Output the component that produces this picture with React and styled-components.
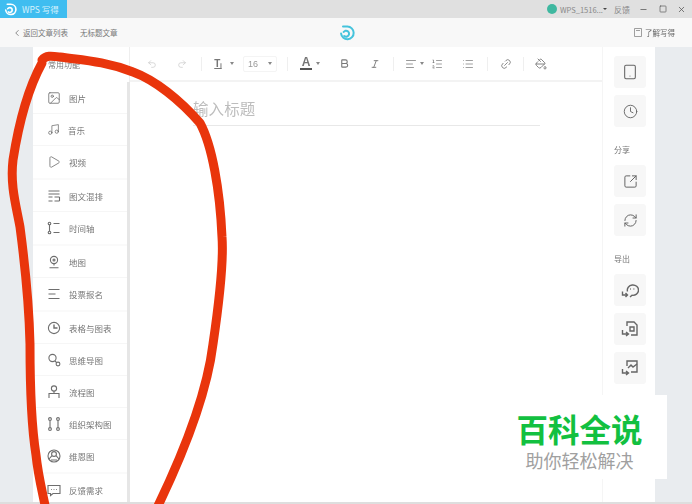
import React from 'react';
import styled, { createGlobalStyle } from 'styled-components';
import {
  Image, Music, Play, Undo2, Redo2, Bold, Italic, Link2, PaintBucket, AlignLeft,
  ListOrdered, List, Tablet, Clock, SquareArrowOutUpRight, RefreshCw, ChevronLeft, X, Minus, Square,
} from 'lucide-react';

const GlobalStyle = createGlobalStyle`
  html, body { margin: 0; padding: 0; background: #e9ecef; }
  body { font-family: "Noto Sans CJK SC", "Liberation Sans", sans-serif; }
`;

const Page = styled.div`
  position: relative;
  width: 692px;
  height: 504px;
  overflow: hidden;
  display: flex;
  flex-direction: column;
  background: #e9ecef;
`;

const Blurred = styled.div`
  display: flex;
  flex-direction: column;
  height: 100%;
  filter: blur(0.55px);
`;

const TitleBar = styled.div`
  height: 18px;
  flex: none;
  display: flex;
  align-items: center;
  background: #e0e0e0;
  color: #777;
  font-size: 8px;
`;

const AppTab = styled.div`
  width: 67px;
  height: 18px;
  display: flex;
  align-items: center;
  gap: 5px;
  padding-left: 4px;
  box-sizing: border-box;
  background: #3fbdf0;
  color: #d8f2fc;
  font-size: 8.5px;
`;

const TitleRight = styled.div`
  margin-left: auto;
  display: flex;
  align-items: center;
  padding-right: 1px;
`;

const Avatar = styled.span`
  width: 10px;
  height: 10px;
  border-radius: 50%;
  background: #3fb8a0;
  margin-right: 3px;
`;

const Account = styled.span`
  width: 43px;
  white-space: nowrap;
  font-size: 7.5px;
  color: #888;
`;

const Dot = styled.span`
  width: 0;
  height: 0;
  border-left: 2px solid transparent;
  border-right: 2px solid transparent;
  border-top: 2px solid #444;
  margin-right: 7px;
`;

const WinLabel = styled.span`
  width: 20px;
  color: #888;
`;

const WinButton = styled.span`
  width: 19px;
  display: flex;
  justify-content: center;
  color: #555;
`;

const NavBar = styled.div`
  height: 29px;
  flex: none;
  display: flex;
  align-items: center;
  background: #f8f8f8;
  color: #777;
  font-size: 7.5px;
  padding: 0 17px 0 12px;
`;

const NavBack = styled.span`
  display: flex;
  align-items: center;
  gap: 1px;
  width: 68px;
  white-space: nowrap;
`;

const NavTitle = styled.span`
  width: 100px;
  white-space: nowrap;
`;

const NavLogo = styled.span`
  margin-left: 159px;
  display: flex;
`;

const NavHelp = styled.span`
  margin-left: auto;
  display: flex;
  align-items: center;
  gap: 3px;
  color: #666;
`;

const Body = styled.div`
  flex: 1;
  min-height: 0;
  display: flex;
  padding-left: 33px;
  padding-right: 37px;
`;

const Sidebar = styled.div`
  width: 97px;
  flex: none;
  display: flex;
  flex-direction: column;
  background: #fff;
`;

const SideHead = styled.div`
  height: 35px;
  flex: none;
  display: flex;
  align-items: center;
  padding-left: 15px;
  font-size: 8px;
  color: #777;
  border-right: 1px solid #eee;
  padding-bottom: 1px;
  box-sizing: border-box;
`;

const SideList = styled.div`
  flex: 1;
  overflow: hidden;
  border-right: 3px solid #e6e6e6;
  background: #fafafa;
`;

const Group = styled.div`
  margin-bottom: 2px;
  background: #fff;
`;

const Row = styled.div`
  height: 32px;
  box-sizing: border-box;
  display: flex;
  align-items: center;
  gap: 8px;
  padding-left: 14px;
  font-size: 8.5px;
  color: #777;
  border-bottom: 1px solid #f6f6f6;
  &:last-child { border-bottom: none; }
  svg { flex: none; color: #6e6e6e; }
`;

const Editor = styled.div`
  flex: 1;
  min-width: 0;
  display: flex;
  flex-direction: column;
  background: #fff;
`;

const Toolbar = styled.div`
  height: 35px;
  flex: none;
  display: flex;
  align-items: center;
  padding-left: 8px;
  box-sizing: border-box;
  border-bottom: 2px solid #f3f3f3;
  color: #777;
`;

const Slot = styled.span`
  width: ${p => p.$w}px;
  flex: none;
  display: flex;
  justify-content: center;
  align-items: center;
  color: ${p => (p.$light ? '#c4c4c4' : '#777')};
`;

const Sep = styled.span`
  width: 1px;
  height: 14px;
  background: #efefef;
`;

const Caret = styled.span`
  width: 0;
  height: 0;
  border-left: 2.5px solid transparent;
  border-right: 2.5px solid transparent;
  border-top: 3px solid #888;
`;

const TextStyle = styled.span`
  font: 600 10px "Liberation Sans", sans-serif;
  color: #777;
  padding-left: 4px;
  text-decoration: underline;
`;

const FontColor = styled.span`
  font: 600 12px/11px "Liberation Sans", sans-serif;
  color: #777;
  border-bottom: 2px solid #555;
  padding: 0 2px;
`;

const SizeBox = styled.span`
  width: 34px;
  height: 16px;
  margin-left: 7px;
  flex: none;
  display: flex;
  align-items: center;
  justify-content: space-between;
  box-sizing: border-box;
  padding: 0 4px;
  border: 1px solid #f4f4f4;
  border-radius: 2px;
  font: 9px "Liberation Sans", sans-serif;
  color: #999;
`;

const TitleInput = styled.div`
  margin: 15px 62px 0 63px;
  height: 28px;
  line-height: 22px;
  font-size: 15.5px;
  color: #bdbdbd;
  letter-spacing: 0.1px;
  border-bottom: 1px solid #e8e8e8;
`;

const RightPanel = styled.div`
  width: 53px;
  flex: none;
  display: flex;
  flex-direction: column;
  align-items: flex-start;
  padding: 9px 0 0 11px;
  box-sizing: border-box;
  background: #fff;
  border-left: 1px solid #f5f5f5;
`;

const SideButton = styled.div`
  width: 32px;
  height: 32px;
  flex: none;
  margin-bottom: 7px;
  display: flex;
  align-items: center;
  justify-content: center;
  border-radius: 3px;
  background: #f7f7f7;
  color: #666;
`;

const PanelLabel = styled.div`
  height: 14px;
  line-height: 14px;
  margin: 9px 0 8px;
  font-size: 8px;
  color: #777;
`;

const BottomLine = styled.div`
  height: 2px;
  flex: none;
  background: #dedede;
`;

/* red pen mark drawn over the screenshot */
const Annotation = styled.svg`
  position: absolute;
  left: 0;
  top: 0;
  pointer-events: none;
  filter: blur(0.4px);
`;

const Watermark = styled.div`
  position: absolute;
  left: 510px;
  top: 395px;
  width: 157px;
  height: 84px;
  box-sizing: border-box;
  padding-right: 18px;
  background: #fff;
  display: flex;
  flex-direction: column;
  align-items: center;
`;

const MarkTitle = styled.div`
  margin-top: 17px;
  font-size: 31.5px;
  line-height: 32px;
  font-weight: 700;
  color: #12c040;
  white-space: nowrap;
`;

const MarkSub = styled.div`
  margin-top: 6px;
  font-size: 18px;
  line-height: 20px;
  color: #a0a0a0;
  white-space: nowrap;
`;

const Logo = ({ size, color }) => (
  <svg width={size} height={size} viewBox="0 0 16 16" fill="none" stroke={color} strokeWidth="2" strokeLinecap="round">
    <path d="M4 1.6h4.4a6.3 6.3 0 1 1-6.3 7" />
    <path d="M5.2 11a3 3 0 1 0 1-5.2L4.6 7" />
  </svg>
);

const Ic = ({ children }) => (
  <svg width="14" height="14" viewBox="0 0 14 14" fill="none" stroke="currentColor" strokeWidth="1.1">
    {children}
  </svg>
);

const LayoutIcon = () => (
  <Ic><path d="M1.5 2h11M1.5 5h11M1.5 8h4M7.5 8h5M1.5 12h4M7.5 12h5M12.5 8v4" /></Ic>
);
const TimelineIcon = () => (
  <Ic><circle cx="2.5" cy="2.5" r="1.3" /><circle cx="2.5" cy="11.5" r="1.3" /><path d="M2.5 4v6M6.5 2.5h6M6.5 11.5h6" /></Ic>
);
const MapIcon = () => (
  <Ic><circle cx="7" cy="5" r="3.6" /><circle cx="7" cy="5" r="1" /><path d="M7 8.6v2M2.5 12.8h9" /></Ic>
);
const VoteIcon = () => (
  <Ic><path d="M1.5 2.5h11M1.5 7h7M1.5 11.5h11" /></Ic>
);
const ChartIcon = () => (
  <Ic><circle cx="7" cy="7" r="5.6" /><path d="M7 3.5V7h3.5" strokeWidth="1.4" /></Ic>
);
const MindIcon = () => (
  <Ic><circle cx="5.5" cy="5" r="3.6" /><circle cx="11" cy="11" r="1.9" /><path d="M8 8l1.6 1.6" /></Ic>
);
const FlowIcon = () => (
  <Ic><circle cx="7" cy="3.5" r="2.6" /><path d="M7 6v2M2 13V8.5h10V13" /></Ic>
);
const OrgIcon = () => (
  <Ic><circle cx="3" cy="2" r="1.4" /><circle cx="3" cy="12" r="1.4" /><circle cx="11" cy="2" r="1.4" /><circle cx="11" cy="12" r="1.4" /><path d="M3 3.4v7.2M11 3.4v7.2" /></Ic>
);
const VennIcon = () => (
  <Ic><circle cx="7" cy="7" r="6" /><circle cx="7" cy="5" r="2.4" /><path d="M2 10l3-3.4M12 10L9 6.6M4 11h6" /></Ic>
);
const FeedbackIcon = () => (
  <Ic><path d="M1 2.5h12v8H6l-2.5 2v-2H1z" /><path d="M4 6.5h.8M6.6 6.5h.8M9.2 6.5h.8" /></Ic>
);

const ExportBubble = () => (
  <svg width="18" height="18" viewBox="0 0 18 18" fill="none" stroke="currentColor" strokeWidth="1.4">
    <path d="M6.5 10.5a5.6 5.2 0 1 1 4.5 3.8L9 16" />
    <path d="M9 8h.8M12.5 8h.8" />
    <path d="M1.5 10.5v3.5h5M4.5 12l2 2-2 2" />
  </svg>
);
const ExportDoc = () => (
  <svg width="18" height="18" viewBox="0 0 18 18" fill="none" stroke="currentColor" strokeWidth="1.4">
    <path d="M6 6V2h7l3 3v10h-6" />
    <path d="M9 7h4v4H9z" />
    <path d="M1.5 10v4h6M5 12l2.5 2L5 16" />
  </svg>
);
const ExportImage = () => (
  <svg width="18" height="18" viewBox="0 0 18 18" fill="none" stroke="currentColor" strokeWidth="1.4">
    <path d="M6 7V2h10v11h-6" />
    <path d="M7 9l3-3 2 2 4-3" />
    <path d="M1.5 10v4h6M5 12l2.5 2L5 16" />
  </svg>
);

const groups = [
  [['图片', <Image size={14} strokeWidth={1.4} />], ['音乐', <Music size={13} strokeWidth={1.4} />], ['视频', <Play size={14} strokeWidth={1.4} />]],
  [['图文混排', <LayoutIcon />], ['时间轴', <TimelineIcon />]],
  [['地图', <MapIcon />], ['投票报名', <VoteIcon />]],
  [['表格与图表', <ChartIcon />], ['思维导图', <MindIcon />], ['流程图', <FlowIcon />], ['组织架构图', <OrgIcon />], ['维恩图', <VennIcon />]],
  [['反馈需求', <FeedbackIcon />]],
];

const penMark =
  'M42 63 C30 85 20 115 13 160 C10 185 16 205 20 227 C25 265 29 300 30 344 C30 390 32 430 36 455 C38 475 42 490 46 510 ' +
  'M42 60 C46 55 52 56 60 57 C80 60 105 61 133 72 C155 80 180 100 200 123 C212 145 220 190 222 237 C224 265 218 310 213 344 C208 385 190 440 156 510';

export default function App() {
  return (
    <Page>
      <GlobalStyle />
      <Blurred>
        <TitleBar>
          <AppTab>
            <Logo size={13} color="#fff" />
            WPS 写得
          </AppTab>
          <TitleRight>
            <Avatar />
            <Account>WPS_1516...</Account>
            <Dot />
            <WinLabel>反馈</WinLabel>
            <WinButton><Minus size={9} strokeWidth={2} /></WinButton>
            <WinButton><Square size={8} strokeWidth={2} /></WinButton>
            <WinButton><X size={9} strokeWidth={2} /></WinButton>
          </TitleRight>
        </TitleBar>
        <NavBar>
          <NavBack><ChevronLeft size={10} strokeWidth={2} />返回文章列表</NavBack>
          <NavTitle>无标题文章</NavTitle>
          <NavLogo><Logo size={16} color="#45c3dc" /></NavLogo>
          <NavHelp>
            <svg width="8" height="9" viewBox="0 0 8 9" fill="none" stroke="#888" strokeWidth="0.8"><path d="M.5.5h7v8h-7zM2 2.5h4" /></svg>
            了解写得
          </NavHelp>
        </NavBar>
        <Body>
          <Sidebar>
            <SideHead>常用功能</SideHead>
            <SideList>
              {groups.map((rows, i) => (
                <Group key={i}>
                  {rows.map(([label, icon]) => (
                    <Row key={label}>{icon}{label}</Row>
                  ))}
                </Group>
              ))}
            </SideList>
          </Sidebar>
          <Editor>
            <Toolbar>
              <Slot $w={28} $light><Undo2 size={10} strokeWidth={1.5} /></Slot>
              <Slot $w={32} $light><Redo2 size={10} strokeWidth={1.5} /></Slot>
              <Slot $w={6}><Sep /></Slot>
              <Slot $w={24}><TextStyle>Tᵢ</TextStyle></Slot>
              <Slot $w={8}><Caret /></Slot>
              <SizeBox>16<Caret /></SizeBox>
              <Slot $w={21}><Sep /></Slot>
              <Slot $w={16}><FontColor>A</FontColor></Slot>
              <Slot $w={8}><Caret /></Slot>
              <Slot $w={44}><Bold size={11} strokeWidth={2.4} /></Slot>
              <Slot $w={18}><Italic size={10} strokeWidth={2.2} /></Slot>
              <Slot $w={19}><Sep /></Slot>
              <Slot $w={16}><AlignLeft size={12} strokeWidth={1.5} /></Slot>
              <Slot $w={6}><Caret /></Slot>
              <Slot $w={24}><ListOrdered size={12} strokeWidth={1.4} /></Slot>
              <Slot $w={38}><List size={12} strokeWidth={1.4} /></Slot>
              <Sep />
              <Slot $w={35}><Link2 size={12} strokeWidth={1.6} style={{ transform: 'rotate(-45deg)' }} /></Slot>
              <Sep />
              <Slot $w={34}><PaintBucket size={12} strokeWidth={1.8} /></Slot>
            </Toolbar>
            <TitleInput>输入标题</TitleInput>
          </Editor>
          <RightPanel>
            <SideButton><Tablet size={16} strokeWidth={1.6} /></SideButton>
            <SideButton><Clock size={15} strokeWidth={1.5} /></SideButton>
            <PanelLabel>分享</PanelLabel>
            <SideButton><SquareArrowOutUpRight size={15} strokeWidth={1.6} /></SideButton>
            <SideButton><RefreshCw size={15} strokeWidth={1.6} /></SideButton>
            <PanelLabel>导出</PanelLabel>
            <SideButton><ExportBubble /></SideButton>
            <SideButton><ExportDoc /></SideButton>
            <SideButton><ExportImage /></SideButton>
          </RightPanel>
        </Body>
        <BottomLine />
      </Blurred>
      <Annotation width="692" height="504" viewBox="0 0 692 504" fill="none">
        <path d={penMark} stroke="#e9350c" strokeWidth="9" strokeLinecap="round" strokeLinejoin="round" />
      </Annotation>
      <Watermark>
        <MarkTitle>百科全说</MarkTitle>
        <MarkSub>助你轻松解决</MarkSub>
      </Watermark>
    </Page>
  );
}
